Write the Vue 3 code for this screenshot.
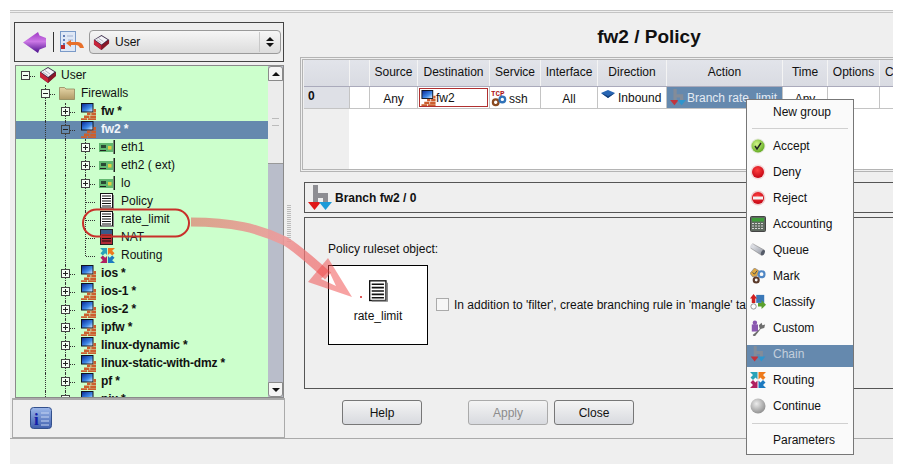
<template>
  <div class="page">
    <!-- shared icons -->
    <svg class="defs" width="0" height="0">
      <defs>
        <linearGradient id="screen" x1="0" y1="0" x2="1" y2="1"><stop offset="0" stop-color="#0a2a9a"/><stop offset="0.6" stop-color="#3f8ae8"/><stop offset="1" stop-color="#d8ecff"/></linearGradient>
        <linearGradient id="purple" x1="0" y1="0" x2="0" y2="1"><stop offset="0" stop-color="#a03cc4"/><stop offset="0.45" stop-color="#cc78e6"/><stop offset="1" stop-color="#4a0f8c"/></linearGradient>
        <linearGradient id="folder" x1="0" y1="0" x2="0" y2="1"><stop offset="0" stop-color="#e6d6a8"/><stop offset="1" stop-color="#b09a66"/></linearGradient>
        <linearGradient id="trail" gradientUnits="userSpaceOnUse" x1="190" y1="222" x2="330" y2="280"><stop offset="0" stop-color="#d9a088" stop-opacity="0.95"/><stop offset="0.6" stop-color="#ee9a9a" stop-opacity="0.9"/><stop offset="1" stop-color="#f04c4c" stop-opacity="0.55"/></linearGradient>
        <radialGradient id="green" cx="0.4" cy="0.35" r="0.7"><stop offset="0" stop-color="#d2f58a"/><stop offset="1" stop-color="#5da81c"/></radialGradient>
        <radialGradient id="red" cx="0.45" cy="0.35" r="0.7"><stop offset="0" stop-color="#ff4040"/><stop offset="1" stop-color="#c00010"/></radialGradient>
        <radialGradient id="grey" cx="0.4" cy="0.35" r="0.7"><stop offset="0" stop-color="#ececec"/><stop offset="1" stop-color="#8c8c8c"/></radialGradient>
        <linearGradient id="infoBg" x1="0" y1="0" x2="0" y2="1"><stop offset="0" stop-color="#9db8ea"/><stop offset="1" stop-color="#3f5fae"/></linearGradient>
        <linearGradient id="pipe" x1="0" y1="0" x2="1" y2="1"><stop offset="0" stop-color="#f0f2f6"/><stop offset="1" stop-color="#8a8e9a"/></linearGradient>

        <symbol id="firewall" viewBox="0 0 15 17">
          <rect x="0" y="0" width="12.500" height="9.500" fill="#10131f"/>
          <rect x="1" y="1" width="10.500" height="7.500" fill="url(#screen)"/>
          <path d="M12.500 6H15v3h-2.500zM6 9.500h3.500V12H6zM10.300 9.500H15V12h-4.700zM3 12.500h5.500V15H3zM9.200 12.500H15V15H9.200zM0 15.200h6V17H0zM6.800 15.200H15V17H6.800z" fill="#cc5f2e"/>
        </symbol>
        <symbol id="library" viewBox="0 0 18 18">
          <path d="M1 6 9 1l8 5v3l-8 8-8-6z" fill="#3a2a4a"/>
          <path d="M1 6l8 6v5l-8-6z" fill="#c8243a"/>
          <path d="M9 12l8-6v4l-8 7z" fill="#8a1828"/>
          <path d="M2 6l7-4 6.500 4-6.500 5z" fill="#f4f4f8"/>
          <path d="M4 6l5 3.500M6 4.500l5 3.500" stroke="#9a9aa8" stroke-width="0.7"/>
        </symbol>
        <symbol id="folderIc" viewBox="0 0 16 14">
          <path d="M0.500 3V1.500h5L7 3h8.500v10.500H.5z" fill="url(#folder)" stroke="#8a7a52" stroke-width="0.7"/>
        </symbol>
        <symbol id="nic" viewBox="0 0 16 14">
          <rect x="0" y="3" width="14" height="9" fill="#62b870"/>
          <rect x="2" y="5" width="5" height="3" fill="#2a4a34"/>
          <rect x="9" y="6" width="3.500" height="3.500" fill="#e0d040"/>
          <path d="M1 10h6v1H1z" fill="#222"/>
          <rect x="14.500" y="0" width="1.500" height="14" fill="#222"/>
        </symbol>
        <symbol id="ruleset" viewBox="0 0 14 16">
          <rect x="0.500" y="0.500" width="12" height="14.500" fill="#fff" stroke="#111"/>
          <path d="M2 3h9M2 5.500h9M2 8h9M2 10.500h9M2 13h9" stroke="#111" stroke-width="1.200"/>
          <path d="M13 2h1v14H2v-1h11z" fill="#888"/>
        </symbol>
        <symbol id="natIc" viewBox="0 0 14 16">
          <rect x="0.500" y="0.500" width="12" height="15" fill="#b02a36" stroke="#222"/>
          <rect x="1" y="1" width="11" height="4" fill="#3a5a8a"/>
          <path d="M2 7h9M2 9.500h9M2 12h9" stroke="#111" stroke-width="1.200"/>
        </symbol>
        <symbol id="routing" viewBox="0 0 16 16">
          <path d="M0 0h7.500v7.500L5.500 5.500 3 8 .5 5.500 3 3z" fill="#2aa3b8"/>
          <path d="M16 0H8.500v7.500l2-2L13 8l2.500-2.500L13 3z" fill="#ee7a1c"/>
          <path d="M0 16h7.500V8.500l-2 2L3 8 .5 10.500 3 13z" fill="#b02060"/>
          <path d="M16 16H8.500V8.500l2 2L13 8l2.500 2.500L13 13z" fill="#1c7ac0"/>
        </symbol>
        <symbol id="branch" viewBox="0 0 24 26">
          <path d="M5 0h5v8h10v10h-5v-5h-5v6H5z" fill="#8d8d92"/>
          <path d="M0 17h13l-6.500 8z" fill="#e01818"/>
          <path d="M11 17h13l-6.500 8z" fill="#1c9ad8"/>
        </symbol>
        <symbol id="svc" viewBox="0 0 18 18">
          <text x="0" y="7" class="tcp">TCP</text>
          <circle cx="5" cy="13.500" r="3" fill="none" stroke="#8a4a20" stroke-width="2.400"/>
          <circle cx="12" cy="10.500" r="3" fill="none" stroke="#2f72b8" stroke-width="2.400"/>
        </symbol>
        <symbol id="inbound" viewBox="0 0 14 8">
          <path d="M7 0l7 3-7 5-7-5z" fill="#2866b4"/>
          <path d="M0 3l7 3 7-3-7 5z" fill="#15407a"/>
        </symbol>
        <symbol id="accept" viewBox="0 0 16 16">
          <circle cx="8" cy="8" r="7.500" fill="#e4e8dc"/><circle cx="8" cy="8" r="6.500" fill="url(#green)"/>
          <path d="M5 8l2 3 4-6" fill="none" stroke="#222" stroke-width="1.400"/>
        </symbol>
        <symbol id="deny" viewBox="0 0 16 16">
          <circle cx="8" cy="8" r="7.500" fill="#f4dcdc"/><circle cx="8" cy="8" r="6" fill="url(#red)"/>
        </symbol>
        <symbol id="reject" viewBox="0 0 16 16">
          <circle cx="8" cy="8" r="7.500" fill="#eecccc"/><circle cx="8" cy="8" r="6" fill="url(#red)"/>
          <rect x="3" y="6.500" width="10" height="3" fill="#f4f4f4"/>
        </symbol>
        <symbol id="accounting" viewBox="0 0 16 16">
          <rect x="0.500" y="0.500" width="15" height="15" rx="1" fill="#5f6a60" stroke="#444"/>
          <rect x="2" y="2" width="12" height="3.500" fill="#3e9e3a"/>
          <path d="M2 7.500h12M2 10h12M2 12.500h12" stroke="#d4d4d4" stroke-dasharray="2 1"/>
        </symbol>
        <symbol id="queue" viewBox="0 0 18 16">
          <path d="M3 1 16 8l-3 6L1 6z" fill="url(#pipe)" stroke="#777" stroke-width="0.600"/>
          <ellipse cx="14.500" cy="11" rx="2" ry="3.200" transform="rotate(25 14.500 11)" fill="#555b68"/>
          <ellipse cx="2" cy="3.500" rx="1.500" ry="2.800" transform="rotate(25 2 3.500)" fill="#d8dae0"/>
        </symbol>
        <symbol id="mark" viewBox="0 0 18 18">
          <path d="M5 0l5 3-2 6-5 1-3-4z" fill="#e0a840" stroke="#7a7a8a" stroke-width="0.700"/>
          <path d="M3 5l2 2 3-4" stroke="#345" fill="none"/>
          <circle cx="13" cy="7" r="3.300" fill="none" stroke="#4f86c4" stroke-width="2.400"/>
          <circle cx="7" cy="13.500" r="2.800" fill="none" stroke="#5a3a2a" stroke-width="2.400"/>
        </symbol>
        <symbol id="classify" viewBox="0 0 18 18">
          <rect x="7" y="1" width="9" height="9" fill="#3a78b8"/>
          <path d="M4 0l4 5H6v5H2V5H0z" fill="#d02020"/>
          <path d="M9 10h4V7l5 5-5 5v-3H9z" fill="#5aa02c"/>
          <circle cx="4" cy="14" r="3" fill="#fff" stroke="#888"/>
        </symbol>
        <symbol id="custom" viewBox="0 0 18 18">
          <path d="M2 5h7v8H2z" fill="#8a58b0"/><circle cx="5.500" cy="3" r="2.500" fill="#8a58b0"/>
          <path d="M3 17l8-7-1-4 3-3 1 3 3-1-1 4-4 1-7 9z" fill="#6e6e6e"/>
        </symbol>
        <symbol id="continueIc" viewBox="0 0 16 16">
          <circle cx="8" cy="8" r="7.500" fill="url(#grey)"/>
        </symbol>
        <symbol id="backIc" viewBox="0 0 23 21">
          <path d="M0 10.500 15 0l1.500 3.500L23 6v9l-6.500 2.500L15 21z" fill="url(#purple)"/>
        </symbol>
        <symbol id="toolIc" viewBox="0 0 25 22">
          <rect x="0.500" y="0.500" width="15" height="20" fill="#dfe8f6" stroke="#7a9ac8"/>
          <path d="M3 5h2M3 9h2M3 13h2" stroke="#3a5aa0" stroke-width="1.400"/>
          <path d="M7 5h6M8 9h5" stroke="#a0b0d0"/>
          <path d="M6 12l5-3v2h7c3 0 5 2 6 6h-4c-1-2-2-3-4-3h-5v2z" fill="#e8702a"/>
          <path d="M1 14h4v4H1z" fill="#c02a2a"/>
        </symbol>
      </defs>
    </svg>

    <div class="window">
      <div class="main">
        <!-- left: object tree -->
        <aside class="left">
          <div class="toolbar">
            <svg class="ic back"><use href="#backIc"/></svg>
            <span class="tb-sep"></span>
            <svg class="ic tool"><use href="#toolIc"/></svg>
            <div class="combo">
              <svg class="ic lib"><use href="#library"/></svg>
              <span class="combo-text">User</span>
              <span class="combo-arrows"><i class="up"></i><i class="down"></i></span>
            </div>
          </div>

          <div class="tree">
            <div class="tree-rows">
              <div v-for="row in treeRows" :key="row.label" class="tree-row" :class="{ selected: row.selected }">
                <span v-for="(g, i) in row.guides" :key="i" class="cell" :class="g"></span>
                <span class="cell branch" :class="{ vline: row.depth > 0 && row.cont, vend: row.depth > 0 && !row.cont }">
                  <span v-if="row.exp" class="expander" :class="{ open: row.exp === 'open' }"></span>
                </span>
                <svg class="ic node" :class="row.icon"><use :href="'#' + row.icon"/></svg>
                <span class="label" :class="{ bold: row.bold }">{{ row.label }}</span>
              </div>
            </div>
            <div class="scrollbar">
              <div class="sb-btn"><i class="up"></i></div>
              <div class="sb-thumb"><span class="grip"></span></div>
              <div class="sb-track"></div>
              <div class="sb-btn"><i class="down"></i></div>
            </div>
          </div>

          <div class="info">
            <svg class="info-ic" viewBox="0 0 22 22">
              <rect x="0.500" y="0.500" width="21" height="21" rx="3" fill="url(#infoBg)" stroke="#33508c"/>
              <path d="M11 6h8M11 10h8M11 14h8M11 18h8" stroke="#c5d4f2"/>
              <text x="4" y="18" class="info-i">i</text>
            </svg>
          </div>
        </aside>

        <div class="splitter"><span class="split-grip"></span></div>

        <!-- right: policy editor -->
        <section class="right">
          <h1 class="title">fw2 / Policy</h1>

          <div class="table-frame">
            <div class="grid-row thead">
              <span v-for="h in headers" :key="h" class="th">{{ h }}</span>
            </div>
            <div class="grid-row tbody">
              <span class="row-no">0</span>
              <span class="td"></span>
              <span class="td center low">Any</span>
              <span class="td dest">
                <span class="dest-box"><svg class="ic cell-ic"><use href="#firewall"/></svg>fw2</span>
              </span>
              <span class="td low svc-cell"><svg class="ic svc-ic"><use href="#svc"/></svg>ssh</span>
              <span class="td center low">All</span>
              <span class="td dir"><svg class="ic in-ic"><use href="#inbound"/></svg>Inbound</span>
              <span class="td act"><svg class="ic act-ic"><use href="#branch"/></svg>Branch rate_limit</span>
              <span class="td center low">Any</span>
              <span class="td"></span>
              <span class="td"></span>
            </div>
            <div class="filler"><span class="filler-head"></span></div>
          </div>

          <div class="branch-bar">
            <svg class="ic br-ic"><use href="#branch"/></svg>
            <strong>Branch fw2 / 0</strong>
          </div>

          <div class="panel">
            <p class="panel-label">Policy ruleset object:</p>
            <div class="panel-row">
              <div class="obj-box">
                <svg class="ic obj-ic"><use href="#ruleset"/></svg>
                <span>rate_limit</span>
              </div>
              <label class="check"><span class="box"></span>In addition to 'filter', create branching rule in 'mangle' table</label>
            </div>
          </div>

          <div class="buttons">
            <button class="btn">Help</button>
            <button class="btn apply" disabled>Apply</button>
            <button class="btn close">Close</button>
          </div>
        </section>
      </div>
    </div>

    <!-- annotation drawn over the shot -->
    <svg class="note" width="903" height="474" viewBox="0 0 903 474">
      <rect x="83" y="209.500" width="106" height="27" rx="13.500" fill="none" stroke="#c8302a" stroke-width="2"/>
      <path d="M191 222C232 222 258 228 285 241C300 250 312 262 328 276" fill="none" stroke="url(#trail)" stroke-width="9"/>
      <path fill-rule="evenodd" d="M352 297 328 258 308 282zM336 286 329 271 321 279z" fill="rgba(240,70,70,.5)"/>
      <circle cx="361" cy="297" r="1" fill="#d02020"/>
    </svg>

    <!-- action popup menu -->
    <div class="menu">
      <div class="mi"><span class="mi-text">New group</span></div>
      <div class="sep first"></div>
      <div v-for="m in menuItems" :key="m.label" class="mi" :class="{ hot: m.hot }">
        <svg class="ic mi-ic" :class="{ faded: m.hot }"><use :href="'#' + m.icon"/></svg>
        <span class="mi-text">{{ m.label }}</span>
      </div>
      <div class="sep last"></div>
      <div class="mi params"><span class="mi-text">Parameters</span></div>
    </div>
  </div>
</template>

<script setup>
const L = 'vline'
const childGuides = ['', L, L]

function firewall(label, extra = {}) {
  return { label, depth: 2, icon: 'firewall', bold: true, exp: 'closed', cont: true, guides: ['', L], ...extra }
}
function child(label, icon, extra = {}) {
  return { label, depth: 3, icon, cont: true, guides: childGuides, ...extra }
}

const treeRows = [
  { label: 'User', depth: 0, icon: 'library', exp: 'open', guides: [] },
  { label: 'Firewalls', depth: 1, icon: 'folderIc', exp: 'open', cont: true, guides: [''] },
  firewall('fw *'),
  firewall('fw2 *', { exp: 'open', selected: true }),
  child('eth1', 'nic', { exp: 'closed' }),
  child('eth2 ( ext)', 'nic', { exp: 'closed' }),
  child('lo', 'nic', { exp: 'closed' }),
  child('Policy', 'ruleset'),
  child('rate_limit', 'ruleset'),
  child('NAT', 'natIc'),
  child('Routing', 'routing', { cont: false }),
  firewall('ios *'),
  firewall('ios-1 *'),
  firewall('ios-2 *'),
  firewall('ipfw *'),
  firewall('linux-dynamic *'),
  firewall('linux-static-with-dmz *'),
  firewall('pf *'),
  firewall('pix *'),
]

const headers = ['', '', 'Source', 'Destination', 'Service', 'Interface', 'Direction', 'Action', 'Time', 'Options', 'Comment']

const menuItems = [
  { label: 'Accept', icon: 'accept' },
  { label: 'Deny', icon: 'deny' },
  { label: 'Reject', icon: 'reject' },
  { label: 'Accounting', icon: 'accounting' },
  { label: 'Queue', icon: 'queue' },
  { label: 'Mark', icon: 'mark' },
  { label: 'Classify', icon: 'classify' },
  { label: 'Custom', icon: 'custom' },
  { label: 'Chain', icon: 'branch', hot: true },
  { label: 'Routing', icon: 'routing' },
  { label: 'Continue', icon: 'continueIc' },
]
</script>

<style>
html, body { margin: 0; background: #fff; overflow: hidden; }
</style>

<style scoped>
.page {
  position: relative;
  width: 903px;
  height: 474px;
  overflow: hidden;
  background: #fff;
  font-family: "Liberation Sans", Arial, sans-serif;
  font-size: 12px;
  color: #111;
}
.defs { position: absolute; }
.ic { display: block; flex-shrink: 0; }
.tcp { font: bold 8px "Liberation Mono", monospace; fill: #b01818; }
.info-i { font: bold 17px "Liberation Serif", serif; fill: #1420a8; }

.window {
  margin: 10px 0 0 10px;
  width: 883px;
  height: 454px;
  background: #efefef;
  border-top: 3px double #c4c4c4;
  box-sizing: border-box;
  overflow: hidden;
}
.main {
  display: flex;
  height: 425px;
  border-bottom: 1px solid #aaa;
  box-sizing: content-box;
}

/* left column */
.left {
  width: 275px;
  margin-left: 2px;
  flex-shrink: 0;
  padding-top: 9px;
  display: flex;
  flex-direction: column;
  box-sizing: border-box;
}
.toolbar {
  margin-left: 2px;
  width: 270px;
  height: 40px;
  box-sizing: border-box;
  border: 1px solid #444;
  display: flex;
  align-items: center;
  padding-left: 8px;
}
.back { width: 23px; height: 21px; }
.tb-sep { width: 1px; height: 20px; background: #333; margin: 0 6px 0 7px; }
.tool { width: 25px; height: 22px; margin-right: 4px; }
.combo {
  width: 192px;
  height: 24px;
  box-sizing: border-box;
  border: 1px solid #9a9a9a;
  border-radius: 4px;
  background: linear-gradient(#f6f6f6, #dcdcdc);
  display: flex;
  align-items: center;
  padding-left: 3px;
}
.lib { width: 17px; height: 17px; margin-right: 5px; }
.combo-text { flex: 1; }
.combo-arrows {
  width: 20px;
  height: 20px;
  border-left: 1px solid #c8c8c8;
  display: flex;
  flex-direction: column;
  align-items: center;
  justify-content: center;
  gap: 2px;
}
i.up, i.down { display: block; width: 0; height: 0; border-left: 4px solid transparent; border-right: 4px solid transparent; }
i.up { border-bottom: 4px solid #111; }
i.down { border-top: 4px solid #111; }

.tree {
  margin: 3px 0 0 3px;
  width: 269px;
  height: 333px;
  box-sizing: border-box;
  border: 1px solid #8a8a8a;
  background: #ccffcc;
  display: flex;
  overflow: hidden;
}
.tree-rows { flex: 1; overflow: hidden; min-width: 0; padding-top: 1px; }
.tree-row {
  height: 18px;
  box-sizing: border-box;
  padding-bottom: 2px;
  display: flex;
  align-items: center;
  white-space: nowrap;
}
.tree-row.selected { background: #6589ae; color: #f2f6fa; }
.cell {
  position: relative;
  width: 20px;
  height: 18px;
  flex-shrink: 0;
  align-self: flex-start;
}
.cell.vline::before, .cell.vend::before {
  content: "";
  position: absolute;
  left: 9px;
  top: 0;
  bottom: 0;
  border-left: 1px dotted #333;
}
.cell.vend::before { bottom: 9px; }
.cell.branch::after {
  content: "";
  position: absolute;
  left: 10px;
  top: 9px;
  width: 9px;
  border-top: 1px dotted #333;
}
.expander {
  position: absolute;
  z-index: 1;
  left: 5px;
  top: 4px;
  width: 9px;
  height: 9px;
  box-sizing: border-box;
  border: 1px solid #444;
  background:
    linear-gradient(#222, #222) center / 5px 1px no-repeat,
    linear-gradient(#222, #222) center / 1px 5px no-repeat,
    #f4fff4;
}
.expander.open {
  background: linear-gradient(#222, #222) center / 5px 1px no-repeat, #f4fff4;
}
.selected .expander { background: linear-gradient(#222, #222) center / 5px 1px no-repeat, #6589ae; }
.node { flex-shrink: 0; }
.node.firewall { width: 15px; height: 17px; margin: 0 5px 0 5px; }
.node.library { width: 18px; height: 18px; margin: 0 4px 0 3px; }
.node.folderIc { width: 16px; height: 14px; margin: 0 6px 0 3px; }
.node.nic { width: 16px; height: 14px; margin: 0 6px 0 3px; }
.node.ruleset, .node.natIc { width: 14px; height: 16px; margin: 0 7px 0 4px; }
.node.routing { width: 15px; height: 15px; margin: 0 6px 0 4px; }
.label.bold { font-weight: bold; letter-spacing: -0.14px; }

.scrollbar {
  width: 15px;
  flex-shrink: 0;
  display: flex;
  flex-direction: column;
  background: #b9bdca;
}
.sb-btn {
  height: 15px;
  box-sizing: border-box;
  border: 1px solid #8a8a8a;
  border-radius: 3px 3px 0 0;
  background: #f4f4f4;
  display: flex;
  align-items: center;
  justify-content: center;
}
.scrollbar .sb-btn:last-child { border-radius: 0 0 3px 3px; }
.sb-thumb {
  height: 83px;
  background: #ececec;
  border-bottom: 1px solid #999;
  box-sizing: border-box;
  display: flex;
  align-items: center;
  justify-content: center;
}
.grip { width: 7px; height: 6px; border-top: 1px solid #bbb; border-bottom: 1px solid #bbb; }
.sb-track { flex: 1; }

.info {
  width: 273px;
  height: 40px;
  box-sizing: border-box;
  border: 1px solid #aaa;
  border-top: 2px solid #aaa;
  padding: 7px 0 0 17px;
}
.info-ic { display: block; width: 22px; height: 22px; }

.splitter {
  width: 13px;
  flex-shrink: 0;
  padding-top: 192px;
  box-sizing: border-box;
}
.split-grip {
  display: block;
  width: 4px;
  height: 38px;
  background: repeating-linear-gradient(#bbb 0 1px, transparent 1px 2px);
}

/* right column */
.right { width: 698px; flex-shrink: 0; }
.title {
  margin: 0;
  height: 44px;
  line-height: 47px;
  text-align: center;
  font-size: 19px;
  font-weight: bold;
  color: #111;
}
.table-frame {
  height: 115px;
  box-sizing: border-box;
  border: 3px double #b4b4b4;
  border-right: none;
  padding: 0 0 0 1px;
  display: flex;
  flex-direction: column;
}
.grid-row {
  display: grid;
  grid-template-columns: 45px 20px 48px 72px 51px 57px 69px 116px 45px 52px 1fr;
}
.thead {
  height: 26px;
  background: linear-gradient(#e2e4ea, #d9dbe2);
  border-bottom: 1px solid #aab;
}
.th {
  text-align: center;
  line-height: 25px;
  border-left: 1px solid #f4f4f4;
  white-space: nowrap;
  overflow: hidden;
}
.th:first-child { border-left: none; }
.th:last-child { text-align: left; padding-left: 5px; }
.tbody { height: 21px; background: #fff; border-bottom: 1px solid #c4c4c4; }
.row-no {
  background: #dee0e6;
  font-weight: bold;
  padding-left: 4px;
  line-height: 19px;
}
.td {
  border-left: 1px solid #c4c4c4;
  display: flex;
  align-items: center;
  white-space: nowrap;
  overflow: hidden;
}
.td.center { justify-content: center; }
.td.low { padding-top: 2px; box-sizing: border-box; }
.dest-box {
  flex: 1;
  align-self: stretch;
  margin: 1px;
  padding-left: 1px;
  border: 1px solid #b03030;
  display: flex;
  align-items: center;
}
.cell-ic { width: 15px; height: 16px; }
.svc-cell { padding-left: 1px; }
.svc-ic { width: 17px; height: 18px; margin: -2px 1px 0 0; }
.dir { padding-left: 3px; box-sizing: border-box; }
.in-ic { width: 14px; height: 8px; margin: -8px 3px 0 0; }
.act { background: #6589ae; color: #e4ebf3; padding-left: 3px; box-sizing: border-box; }
.act-ic { width: 16px; height: 17px; margin-right: 1px; opacity: 0.75; }
.filler { flex: 1; background: #fff; }
.filler-head { display: block; width: 45px; height: 100%; background: #efefef; }

.branch-bar {
  margin: 10px 0 0 4px;
  height: 31px;
  box-sizing: border-box;
  border: 1px solid #555;
  display: flex;
  align-items: center;
  padding-left: 3px;
  gap: 3px;
}
.br-ic { width: 24px; height: 26px; }
.panel {
  margin: 4px 0 0 4px;
  height: 172px;
  box-sizing: border-box;
  border: 1px solid #555;
  padding: 23px 0 0 23px;
}
.panel-label { margin: 0 0 8px; line-height: 16px; }
.panel-row { display: flex; align-items: center; }
.obj-box {
  width: 100px;
  height: 80px;
  box-sizing: border-box;
  border: 1px solid #000;
  background: #fff;
  display: flex;
  flex-direction: column;
  align-items: center;
  padding-top: 14px;
  gap: 7px;
}
.obj-ic { width: 19px; height: 22px; }
.check { display: flex; align-items: center; gap: 5px; margin: -1px 0 0 8px; white-space: nowrap; }
.box { width: 13px; height: 13px; background: #f6f6f6; border: 1px solid #aaa; box-sizing: border-box; }

.buttons { display: flex; padding: 11px 0 0 42px; }
.btn {
  width: 80px;
  height: 25px;
  padding: 0;
  border: 1px solid #777;
  border-radius: 3px;
  background: linear-gradient(#f4f4f4, #d8dadf);
  font: 12px "Liberation Sans", Arial, sans-serif;
  color: #111;
}
.apply { margin-left: 46px; color: #8c8c8c; border-color: #aaa; }
.close { margin-left: 6px; }

/* overlay annotation + popup */
.note { position: absolute; left: 0; top: 0; pointer-events: none; }
.menu {
  position: absolute;
  left: 746px;
  top: 99px;
  width: 108px;
  height: 356px;
  box-sizing: border-box;
  border: 1px solid #777;
  background: #fafafa;
  padding-top: 3px;
}
.mi {
  height: 22px;
  margin-bottom: 4px;
  display: flex;
  padding-left: 26px;
  position: relative;
}
.mi-text { line-height: 18px; white-space: nowrap; }
.mi-ic { position: absolute; left: 3px; top: 1px; width: 16px; height: 16px; }
.mi-ic.faded { opacity: 0.75; }
.mi.hot { background: #6589ae; color: #c4cfdc; }
.sep { height: 1px; background: #d0d0d0; margin: 0 5px; }
.sep.first { margin-bottom: 8px; margin-top: -1px; }
.sep.last { margin-top: 1px; }
.mi.params { margin-top: 7px; margin-bottom: 0; }
</style>
